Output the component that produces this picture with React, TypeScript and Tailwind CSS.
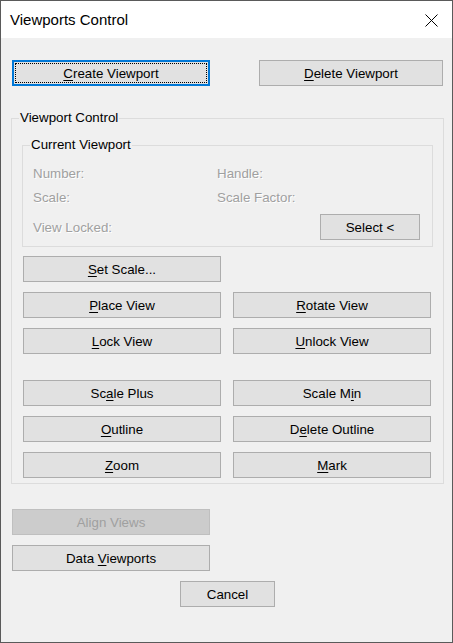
import type { ReactNode } from 'react'

interface BtnProps {
  children: ReactNode
  className?: string
  disabled?: boolean
}

function Btn({ children, className = '', disabled }: BtnProps) {
  return (
    <button
      className={`h-[26px] flex items-center justify-center border text-[13.33px] leading-[15px] ${
        disabled ? 'bg-[#cccccc] border-[#bfbfbf] text-[#a0a0a0]' : 'bg-[#e1e1e1] border-[#adadad] text-black'
      } ${className}`}
    >
      <span>{children}</span>
    </button>
  )
}

const K = ({ children }: { children: ReactNode }) => <u className="underline underline-offset-2">{children}</u>

const Dim = ({ children, className = '' }: { children: ReactNode; className?: string }) => (
  <span className={`text-[13.33px] leading-[15px] text-[#a0a0a0] [text-shadow:1px_1px_0_#ffffff] ${className}`}>{children}</span>
)

export default function App() {
  return (
    <div className="w-[453px] h-[643px] border border-[#5a5a5a] bg-[#f0f0f0] flex flex-col font-['Liberation_Sans',Arial,sans-serif] text-black">
      {/* Title bar */}
      <div className="h-[37px] bg-white flex items-center justify-between pl-[9px] pr-[14px]">
        <span className="text-[15px] leading-[18px]">Viewports Control</span>
        <svg width="13" height="13" viewBox="0 0 13 13" className="mt-[1px]">
          <path d="M0.5 0.5L12.5 12.5M12.5 0.5L0.5 12.5" stroke="#000" strokeWidth="1" />
        </svg>
      </div>

      {/* Top buttons */}
      <div className="mt-[22px] flex pl-[11px]">
        <button className="relative w-[198px] h-[26px] flex items-center justify-center border-2 border-[#0078d7] bg-[#e1e1e1] text-[13.33px] leading-[15px]">
          <span className="absolute inset-[1px] border border-dotted border-black" />
          <span>
            <K>C</K>reate Viewport
          </span>
        </button>
        <Btn className="ml-[49px] w-[184px]">
          <K>D</K>elete Viewport
        </Btn>
      </div>

      {/* Viewport Control group */}
      <div className="relative mt-[32px] ml-[10px] w-[433px] border border-[#dcdcdc] px-[10px] pb-[5px]">
        <span className="absolute -top-[9px] left-[7px] px-[1px] bg-[#f0f0f0] text-[13.33px] leading-[15px]">Viewport Control</span>

        <div className="relative mt-[26px] border border-[#dcdcdc] pl-[10px] pr-[12px] pt-[20px] pb-[6px]">
          <span className="absolute -top-[9px] left-[7px] px-[1px] bg-[#f0f0f0] text-[13.33px] leading-[15px]">Current Viewport</span>
          <div className="flex h-[15px]">
            <Dim className="w-[184px]">Number:</Dim>
            <Dim>Handle:</Dim>
          </div>
          <div className="flex h-[15px] mt-[9px]">
            <Dim className="w-[184px]">Scale:</Dim>
            <Dim>Scale Factor:</Dim>
          </div>
          <div className="flex h-[26px] mt-[9px] items-center justify-between">
            <Dim>View Locked:</Dim>
            <Btn className="w-[100px]">Select &lt;</Btn>
          </div>
        </div>

        <div className="mt-[9px] pl-[1px] grid grid-cols-[198px_198px] gap-x-[12px] gap-y-[10px]">
          <Btn>
            <K>S</K>et Scale...
          </Btn>
          <div />
          <Btn>
            <K>P</K>lace View
          </Btn>
          <Btn>
            <K>R</K>otate View
          </Btn>
          <Btn>
            <K>L</K>ock View
          </Btn>
          <Btn>
            <K>U</K>nlock View
          </Btn>
        </div>

        <div className="mt-[26px] pl-[1px] grid grid-cols-[198px_198px] gap-x-[12px] gap-y-[10px]">
          <Btn>
            Sc<K>a</K>le Plus
          </Btn>
          <Btn>
            Scale M<K>i</K>n
          </Btn>
          <Btn>
            <K>O</K>utline
          </Btn>
          <Btn>
            D<K>e</K>lete Outline
          </Btn>
          <Btn>
            <K>Z</K>oom
          </Btn>
          <Btn>
            <K>M</K>ark
          </Btn>
        </div>
      </div>

      {/* Bottom buttons */}
      <Btn disabled className="mt-[25px] ml-[11px] w-[198px]">
        Ali<K>g</K>n Views
      </Btn>
      <Btn className="mt-[10px] ml-[11px] w-[198px]">
        Data <K>V</K>iewports
      </Btn>
      <Btn className="mt-[10px] ml-[179px] w-[95px]">Cancel</Btn>
    </div>
  )
}
